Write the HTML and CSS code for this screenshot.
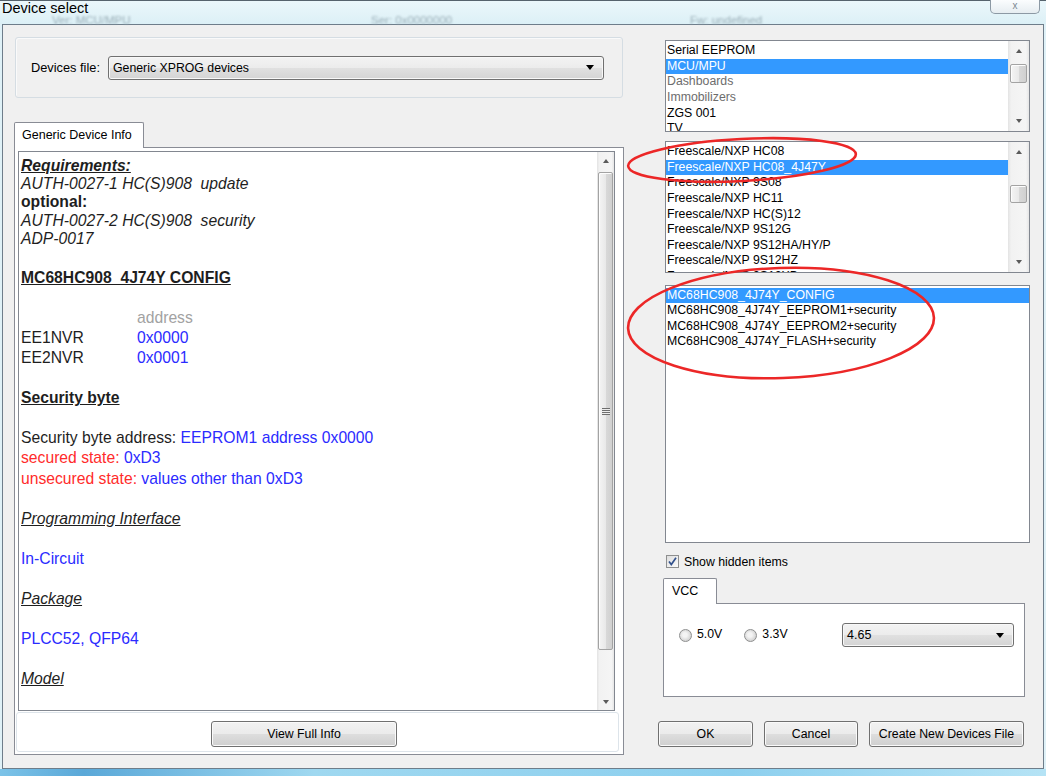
FILE: index.html
```html
<!DOCTYPE html>
<html lang="en">
<head>
    <meta charset="UTF-8">
    <title>Device select</title>
    <link rel="stylesheet" href="styles.css">
</head>
<body>

<div class="titlebar">
    <div class="title">Device select</div>
    <div class="behind">
        <span>Ver: MCU/MPU</span>
        <span>Ser: 0x0000000</span>
        <span>Fw: undefined</span>
    </div>
    <div class="close-btn">x</div>
</div>

<div class="client">

    <!-- left side : devices file + info browser -->
    <div class="left-col">
        <div class="groupbox">
            <span class="label">Devices file:</span>
            <div class="combo file-combo"><span>Generic XPROG devices</span><i class="arrow"></i></div>
        </div>

        <div class="info-tabs">
            <div class="tab-head">Generic Device Info</div>
            <div class="tab-pane info-pane">
                <div class="browser">
                    <div class="doc">
                        <div class="req">
                            <div class="h-req">Requirements:</div>
                            <div class="it">AUTH-0027-1 HC(S)908&nbsp; update</div>
                            <div class="b">optional:</div>
                            <div class="it">AUTH-0027-2 HC(S)908&nbsp; security</div>
                            <div class="it">ADP-0017</div>
                        </div>
                        <div class="lines">
                            <div class="gap"></div>
                            <div class="h-bold">MC68HC908_4J74Y CONFIG</div>
                            <div class="gap"></div>
                            <div class="reg"><span></span><span class="muted">address</span></div>
                            <div class="reg"><span>EE1NVR</span><span class="blue">0x0000</span></div>
                            <div class="reg"><span>EE2NVR</span><span class="blue">0x0001</span></div>
                            <div class="gap"></div>
                            <div class="h-bold">Security byte</div>
                            <div class="gap"></div>
                            <div>Security byte address: <span class="blue">EEPROM1 address 0x0000</span></div>
                            <div><span class="red">secured state:</span> <span class="blue">0xD3</span></div>
                            <div><span class="red">unsecured state:</span> <span class="blue">values other than 0xD3</span></div>
                            <div class="gap"></div>
                            <div class="h-it">Programming Interface</div>
                            <div class="gap"></div>
                            <div class="blue">In-Circuit</div>
                            <div class="gap"></div>
                            <div class="h-it">Package</div>
                            <div class="gap"></div>
                            <div class="blue">PLCC52, QFP64</div>
                            <div class="gap"></div>
                            <div class="h-it">Model</div>
                        </div>
                    </div>
                    <div class="vscroll doc-scroll">
                        <div class="sb-btn up"></div>
                        <div class="sb-track"><div class="sb-thumb grip"></div></div>
                        <div class="sb-btn down"></div>
                    </div>
                </div>
                <div class="browser-foot">
                    <button class="btn view-btn">View Full Info</button>
                </div>
            </div>
        </div>
    </div>

    <!-- right side : category / family / device lists -->
    <div class="right-col">
        <div class="list cat-list">
            <div class="rows">
                <div class="row">Serial EEPROM</div>
                <div class="row sel">MCU/MPU</div>
                <div class="row dim">Dashboards</div>
                <div class="row dim">Immobilizers</div>
                <div class="row">ZGS 001</div>
                <div class="row">TV</div>
            </div>
            <div class="vscroll list-scroll">
                <div class="sb-btn up"></div>
                <div class="sb-track"><div class="sb-thumb cat-thumb"></div></div>
                <div class="sb-btn down"></div>
            </div>
        </div>

        <div class="list fam-list">
            <div class="rows">
                <div class="row">Freescale/NXP HC08</div>
                <div class="row sel">Freescale/NXP HC08_4J47Y</div>
                <div class="row">Freescale/NXP 9S08</div>
                <div class="row">Freescale/NXP HC11</div>
                <div class="row">Freescale/NXP HC(S)12</div>
                <div class="row">Freescale/NXP 9S12G</div>
                <div class="row">Freescale/NXP 9S12HA/HY/P</div>
                <div class="row">Freescale/NXP 9S12HZ</div>
                <div class="row">Freescale/NXP 9S12XD</div>
            </div>
            <div class="vscroll list-scroll">
                <div class="sb-btn up"></div>
                <div class="sb-track"><div class="sb-thumb fam-thumb"></div></div>
                <div class="sb-btn down"></div>
            </div>
        </div>

        <div class="list dev-list">
            <div class="rows">
                <div class="row sel">MC68HC908_4J74Y_CONFIG</div>
                <div class="row">MC68HC908_4J74Y_EEPROM1+security</div>
                <div class="row">MC68HC908_4J74Y_EEPROM2+security</div>
                <div class="row">MC68HC908_4J74Y_FLASH+security</div>
            </div>
        </div>

        <div class="check-row">
            <span class="checkbox">
                <svg width="11" height="11" viewBox="0 0 11 11"><path d="M2 5.5 L4.3 8.5 L9 1.8" fill="none" stroke="#32518c" stroke-width="1.7"/></svg>
            </span>
            Show hidden items
        </div>

        <div class="vcc-tabs">
            <div class="tab-head">VCC</div>
            <div class="tab-pane vcc-pane">
                <span class="radio"></span><span class="radio-label">5.0V</span>
                <span class="radio"></span><span class="radio-label">3.3V</span>
                <div class="combo vcc-combo"><span>4.65</span><i class="arrow"></i></div>
            </div>
        </div>

        <div class="buttons">
            <button class="btn ok-btn">OK</button>
            <button class="btn cancel-btn">Cancel</button>
            <button class="btn create-btn">Create New Devices File</button>
        </div>
    </div>
</div>

<div class="taskstrip"></div>

<!-- red marker circles drawn over the screenshot -->
<svg class="marks" width="1046" height="776" viewBox="0 0 1046 776">
    <ellipse cx="742" cy="160" rx="114" ry="21" transform="rotate(-3 742 160)" fill="none" stroke="#ec2727" stroke-width="2.6"/>
    <ellipse cx="781" cy="323" rx="153" ry="55" transform="rotate(-2 781 323)" fill="none" stroke="#ec2727" stroke-width="2.6"/>
</svg>

</body>
</html>
```

FILE: styles.css
```css
*{
   margin:0;
   padding:0;
   box-sizing:border-box;
}
body{
   width:1046px;
   height:776px;
   overflow:hidden;
   position:relative;
   background:#dff1f7;
   font-family:"Liberation Sans", Arial, sans-serif;
   font-size:12.5px;
   color:#000;
}

/* title bar */
.titlebar{
   height:24px;
   position:relative;
   border-top:1px solid #56636d;
   background:linear-gradient(#ebf7fb,#dcf0f6);
}
.title{
   font-size:14.5px;
   line-height:15px;
   padding-left:2px;
}
.behind{
   display:flex;
   padding-left:52px;
   font-size:11.5px;
   line-height:8px;
   color:#9cb0b9;
   filter:blur(1px);
}
.behind span{
   width:319px;
}
.close-btn{
   position:absolute;
   top:-1px;
   left:990px;
   width:50px;
   height:14px;
   border:1px solid #8c99a4;
   border-top:none;
   border-radius:0 0 5px 5px;
   background:linear-gradient(#fbfdfe,#e6edf1);
   color:#7b8893;
   font-size:10px;
   line-height:11px;
   text-align:center;
}

/* client area */
.client{
   display:flex;
   width:1042px;
   height:745px;
   margin-left:2px;
   padding:12px 0 0 11px;
   border:1px solid #6e7d8a;
   background:#f0f0f0;
}
.left-col{
   width:611px;
}
.right-col{
   width:372px;
   margin-left:33px;
   padding-top:3px;
   display:flex;
   flex-direction:column;
}
.taskstrip{
   height:7px;
   background:linear-gradient(to right,#7cc3e8,#5aa8d8 8%,#9fd8f0 30%,#8ccfee 70%,#b5e3f5);
}

/* group box */
.groupbox{
   width:608px;
   height:61px;
   margin-left:1px;
   display:flex;
   align-items:center;
   padding-left:15px;
   border:1px solid #d5dde3;
   border-radius:3px;
   box-shadow:inset 1px 1px 0 #fafafa;
}
.groupbox .label{
   width:77px;
   font-size:12.8px;
}

/* combo box */
.combo{
   height:24px;
   display:flex;
   align-items:center;
   padding-left:4px;
   border:1px solid #707070;
   border-radius:3px;
   background:linear-gradient(#f3f3f3 0%,#ececec 48%,#e0e0e0 52%,#d4d4d4 100%);
   box-shadow:inset 0 0 0 1px #f8f8f8;
}
.combo .arrow{
   margin-left:auto;
   margin-right:9px;
   border-left:4px solid transparent;
   border-right:4px solid transparent;
   border-top:5px solid #000;
}
.file-combo{
   width:496px;
   font-size:12.3px;
}
.vcc-combo{
   width:172px;
   margin-left:auto;
   margin-right:10px;
   font-size:12.5px;
}

/* tabs */
.info-tabs{
   margin-top:24px;
}
.tab-head{
   position:relative;
   z-index:1;
   height:26px;
   margin-bottom:-1px;
   padding-left:7px;
   line-height:25px;
   background:#fff;
   border:1px solid #898c95;
   border-bottom:none;
   border-radius:2px 2px 0 0;
}
.info-tabs .tab-head{
   width:130px;
}
.tab-pane{
   background:#fff;
   border:1px solid #898c95;
}
.info-pane{
   width:610px;
   height:608px;
   padding:3px 3px 0 3px;
}

/* text browser */
.browser{
   width:597px;
   height:560px;
   display:flex;
   border:1px solid #828790;
}
.doc{
   flex:1;
   padding:5px 0 0 2px;
   font-size:15.7px;
   color:#1e1e1e;
   white-space:nowrap;
   overflow:hidden;
}
.req{
   line-height:18.2px;
}
.lines{
   line-height:20.05px;
}
.gap{
   height:20.05px;
}
.h-req{
   font-weight:bold;
   font-style:italic;
   text-decoration:underline;
}
.it{
   font-style:italic;
}
.b{
   font-weight:bold;
}
.h-bold{
   font-weight:bold;
   text-decoration:underline;
}
.h-it{
   font-style:italic;
   text-decoration:underline;
}
.reg{
   display:flex;
}
.reg span:first-child{
   width:116px;
}
.muted{
   color:#a2a2a2;
}
.blue{
   color:#2b2bff;
}
.red{
   color:#ff2b2b;
}
.browser-foot{
   width:603px;
   height:40px;
   margin:1px 0 0 -2px;
   padding:8px 0 0 194px;
   border:1px solid #dde4ea;
   border-radius:3px;
}

/* scroll bars */
.vscroll{
   display:flex;
   flex-direction:column;
   background:linear-gradient(to right,#e3e3e3,#f2f2f2 15%,#f5f5f5 85%,#e6e6e6);
}
.doc-scroll{
   width:17px;
}
.list-scroll{
   width:21px;
}
.sb-btn{
   height:17px;
   display:flex;
   align-items:center;
   justify-content:center;
}
.list-scroll .sb-btn{
   height:20px;
}
.sb-btn.up::before{
   content:"";
   border-left:3.5px solid transparent;
   border-right:3.5px solid transparent;
   border-bottom:4px solid #5a5a5a;
}
.sb-btn.down::before{
   content:"";
   border-left:3.5px solid transparent;
   border-right:3.5px solid transparent;
   border-top:4px solid #5a5a5a;
}
.sb-track{
   flex:1;
   padding:0 1px;
}
.list-scroll .sb-track{
   padding:0 2px;
}
.sb-thumb{
   border:1px solid #a3a3a3;
   border-radius:2px;
   background:linear-gradient(to right,#f4f4f4,#e9e9e9 50%,#d9d9d9 51%,#d0d0d0);
   box-shadow:inset 1px 1px 0 #fdfdfd;
}
.grip{
   height:478px;
   margin-top:3px;
   display:flex;
   align-items:center;
   justify-content:center;
}
.grip::before{
   content:"";
   width:8px;
   height:7px;
   background:repeating-linear-gradient(#6e6e6e 0 1px,#ececec 1px 2px);
}
.cat-thumb{
   height:19px;
   margin-top:3px;
}
.fam-thumb{
   height:18px;
   margin-top:23px;
}

/* list boxes */
.list{
   display:flex;
   width:365px;
   margin-left:7px;
   overflow:hidden;
   border:1px solid #828790;
   background:#fff;
   font-size:12.3px;
}
.rows{
   flex:1;
   padding-top:2.3px;
   overflow:hidden;
}
.row{
   height:15.6px;
   line-height:15.6px;
   padding-left:1px;
   white-space:nowrap;
}
.row.sel{
   background:#3399ff;
   color:#fff;
}
.row.dim{
   color:#6d6d6d;
}
.cat-list{
   height:92px;
}
.fam-list{
   height:132px;
   margin-top:9px;
}
.dev-list{
   height:258px;
   margin-top:12px;
}
.dev-list .rows{
   padding-top:1.5px;
}

/* check box + vcc */
.check-row{
   height:15px;
   margin:11px 0 0 8px;
   display:flex;
   align-items:center;
   font-size:12.3px;
}
.checkbox{
   width:13px;
   height:13px;
   margin-right:5px;
   display:flex;
   align-items:center;
   justify-content:center;
   border:1px solid #8e8f8f;
   background:linear-gradient(135deg,#dedede,#fbfbfb);
}
.vcc-tabs{
   margin:9px 0 0 5px;
}
.vcc-tabs .tab-head{
   width:54px;
   padding-left:8px;
}
.vcc-pane{
   width:362px;
   height:94px;
   display:flex;
   align-items:flex-start;
   padding:19px 0 0 15px;
}
.radio{
   width:13px;
   height:13px;
   margin-top:6px;
   border:1px solid #8e8f8f;
   border-radius:50%;
   background:radial-gradient(circle at 45% 45%,#f4f4f4 0 25%,#d4d4d4 70%,#e8e8e8);
}
.radio-label{
   margin:4px 22px 0 5px;
   font-size:12.3px;
}

/* buttons */
.btn{
   height:26px;
   border:1px solid #707070;
   border-radius:3px;
   background:linear-gradient(#f2f2f2 0%,#ebebeb 48%,#dddddd 52%,#cfcfcf 100%);
   box-shadow:inset 0 0 0 1px #fafafa;
   font-family:"Liberation Sans", Arial, sans-serif;
   font-size:12.3px;
   color:#000;
}
.view-btn{
   width:186px;
}
.buttons{
   display:flex;
   gap:11px;
   margin-top:24px;
}
.ok-btn{
   width:95px;
}
.cancel-btn{
   width:94px;
}
.create-btn{
   width:155px;
}

.marks{
   position:absolute;
   top:0;
   left:0;
   pointer-events:none;
}
```
